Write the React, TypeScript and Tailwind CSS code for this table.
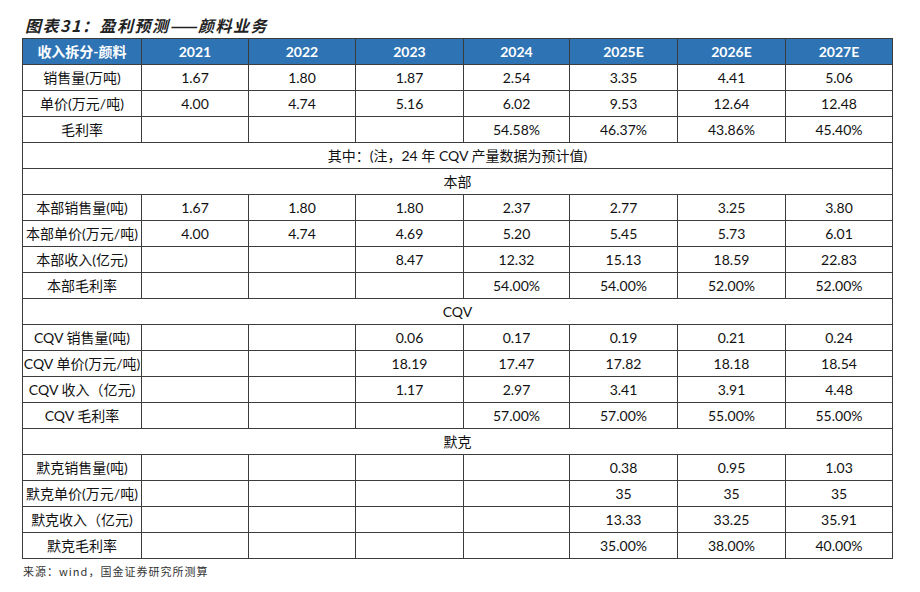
const years = ["2021", "2022", "2023", "2024", "2025E", "2026E", "2027E"];
const widths = [119, 107, 107, 108, 106, 108, 108, 107];

type Row = { label: string; values: string[] } | { section: string };

const rows: Row[] = [
  { label: "销售量(万吨)", values: ["1.67", "1.80", "1.87", "2.54", "3.35", "4.41", "5.06"] },
  { label: "单价(万元/吨)", values: ["4.00", "4.74", "5.16", "6.02", "9.53", "12.64", "12.48"] },
  { label: "毛利率", values: ["", "", "", "54.58%", "46.37%", "43.86%", "45.40%"] },
  { section: "其中：(注，24 年 CQV 产量数据为预计值)" },
  { section: "本部" },
  { label: "本部销售量(吨)", values: ["1.67", "1.80", "1.80", "2.37", "2.77", "3.25", "3.80"] },
  { label: "本部单价(万元/吨)", values: ["4.00", "4.74", "4.69", "5.20", "5.45", "5.73", "6.01"] },
  { label: "本部收入(亿元)", values: ["", "", "8.47", "12.32", "15.13", "18.59", "22.83"] },
  { label: "本部毛利率", values: ["", "", "", "54.00%", "54.00%", "52.00%", "52.00%"] },
  { section: "CQV" },
  { label: "CQV 销售量(吨)", values: ["", "", "0.06", "0.17", "0.19", "0.21", "0.24"] },
  { label: "CQV 单价(万元/吨)", values: ["", "", "18.19", "17.47", "17.82", "18.18", "18.54"] },
  { label: "CQV 收入（亿元)", values: ["", "", "1.17", "2.97", "3.41", "3.91", "4.48"] },
  { label: "CQV 毛利率", values: ["", "", "", "57.00%", "57.00%", "55.00%", "55.00%"] },
  { section: "默克" },
  { label: "默克销售量(吨)", values: ["", "", "", "", "0.38", "0.95", "1.03"] },
  { label: "默克单价(万元/吨)", values: ["", "", "", "", "35", "35", "35"] },
  { label: "默克收入（亿元)", values: ["", "", "", "", "13.33", "33.25", "35.91"] },
  { label: "默克毛利率", values: ["", "", "", "", "35.00%", "38.00%", "40.00%"] },
];

const cell = "border border-[#3c3c3c] h-[26px] p-0 text-center align-middle leading-none whitespace-nowrap";

export default function App() {
  return (
    <div className="w-[920px] h-[592px] bg-white pl-[22px] pt-[14px] text-[#111] font-['Lato','Noto_Sans_CJK_SC',sans-serif]">
      <h1 className="pl-[3px] text-[16px] leading-[22px] font-bold italic tracking-[1.5px] text-[#222] mb-[2px] font-['Noto_Sans_CJK_SC',sans-serif]">
        图表31：盈利预测——颜料业务
      </h1>

      <table className="table-fixed border-collapse w-[870px] text-[14px]">
        <colgroup>
          {widths.map((w, i) => (
            <col key={i} style={{ width: w }} />
          ))}
        </colgroup>
        <thead>
          <tr className="bg-[#2e74b5] text-white font-bold">
            <th className={cell}>收入拆分-颜料</th>
            {years.map((y) => (
              <th key={y} className={cell}>
                {y}
              </th>
            ))}
          </tr>
        </thead>
        <tbody>
          {rows.map((r, i) =>
            "section" in r ? (
              <tr key={i}>
                <td colSpan={8} className={cell}>
                  {r.section}
                </td>
              </tr>
            ) : (
              <tr key={i}>
                <td className={cell}>{r.label}</td>
                {r.values.map((v, j) => (
                  <td key={j} className={cell}>
                    {v}
                  </td>
                ))}
              </tr>
            )
          )}
        </tbody>
      </table>

      <p className="mt-[4px] pl-[1px] text-[11px] leading-[16px] tracking-[1px] text-[#333] font-['Noto_Sans_CJK_SC',sans-serif]">
        来源：wind，国金证券研究所测算
      </p>
    </div>
  );
}
